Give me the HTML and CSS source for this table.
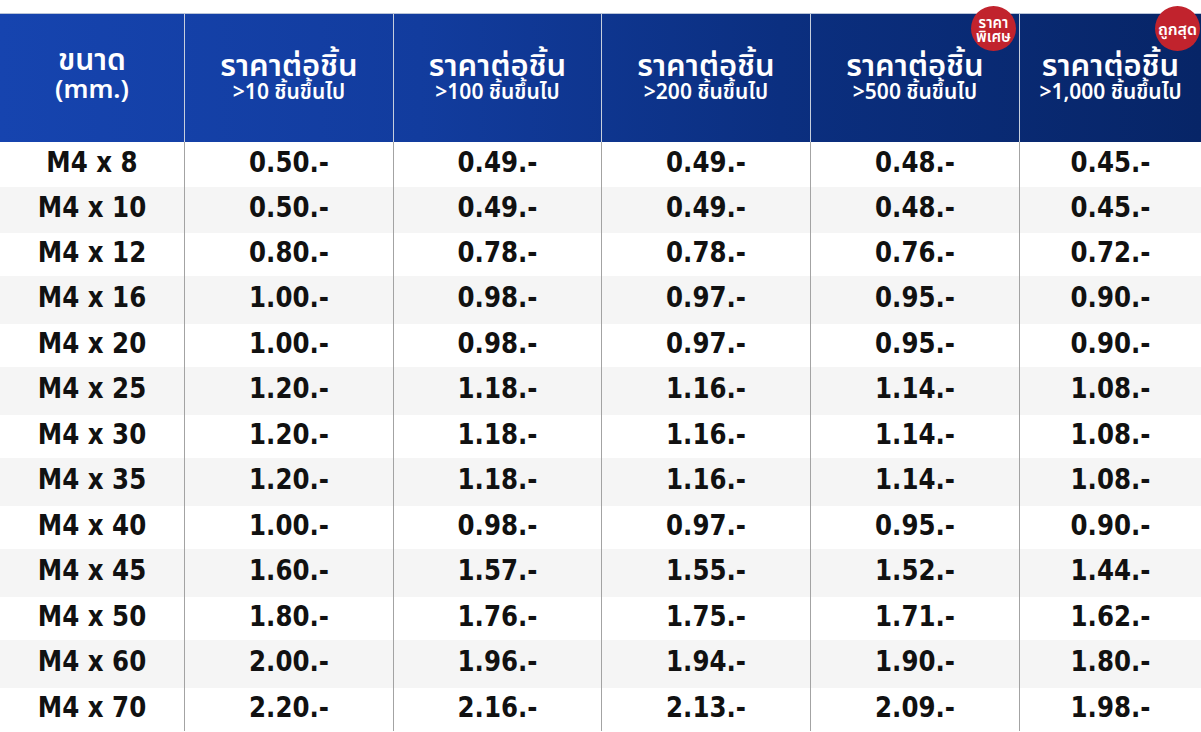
FILE: index.html
```html
<!DOCTYPE html>
<html lang="th">
<head>
<meta charset="utf-8">
<title>ราคา M4</title>
<link rel="stylesheet" href="styles.css">
</head>
<body>
<div class="table">
  <div class="head">
    <div class="hcell first"><div class="title big">ขนาด</div><div class="title mm">(mm.)</div></div>
    <div class="hcell"><div class="title">ราคาต่อชิ้น</div><div class="sub">&gt;10 ชิ้นขึ้นไป</div></div>
    <div class="hcell"><div class="title">ราคาต่อชิ้น</div><div class="sub">&gt;100 ชิ้นขึ้นไป</div></div>
    <div class="hcell"><div class="title">ราคาต่อชิ้น</div><div class="sub">&gt;200 ชิ้นขึ้นไป</div></div>
    <div class="hcell"><div class="title">ราคาต่อชิ้น</div><div class="sub">&gt;500 ชิ้นขึ้นไป</div><div class="badge two"><span>ราคา</span><span>พิเศษ</span></div></div>
    <div class="hcell"><div class="title">ราคาต่อชิ้น</div><div class="sub">&gt;1,000 ชิ้นขึ้นไป</div><div class="badge one"><span>ถูกสุด</span></div></div>
  </div>
  <div class="body">
    <div class="row"><div class="cell"><span>M4 x 8</span></div><div class="cell"><span>0.50.-</span></div><div class="cell"><span>0.49.-</span></div><div class="cell"><span>0.49.-</span></div><div class="cell"><span>0.48.-</span></div><div class="cell"><span>0.45.-</span></div></div>
    <div class="row"><div class="cell"><span>M4 x 10</span></div><div class="cell"><span>0.50.-</span></div><div class="cell"><span>0.49.-</span></div><div class="cell"><span>0.49.-</span></div><div class="cell"><span>0.48.-</span></div><div class="cell"><span>0.45.-</span></div></div>
    <div class="row"><div class="cell"><span>M4 x 12</span></div><div class="cell"><span>0.80.-</span></div><div class="cell"><span>0.78.-</span></div><div class="cell"><span>0.78.-</span></div><div class="cell"><span>0.76.-</span></div><div class="cell"><span>0.72.-</span></div></div>
    <div class="row"><div class="cell"><span>M4 x 16</span></div><div class="cell"><span>1.00.-</span></div><div class="cell"><span>0.98.-</span></div><div class="cell"><span>0.97.-</span></div><div class="cell"><span>0.95.-</span></div><div class="cell"><span>0.90.-</span></div></div>
    <div class="row"><div class="cell"><span>M4 x 20</span></div><div class="cell"><span>1.00.-</span></div><div class="cell"><span>0.98.-</span></div><div class="cell"><span>0.97.-</span></div><div class="cell"><span>0.95.-</span></div><div class="cell"><span>0.90.-</span></div></div>
    <div class="row"><div class="cell"><span>M4 x 25</span></div><div class="cell"><span>1.20.-</span></div><div class="cell"><span>1.18.-</span></div><div class="cell"><span>1.16.-</span></div><div class="cell"><span>1.14.-</span></div><div class="cell"><span>1.08.-</span></div></div>
    <div class="row"><div class="cell"><span>M4 x 30</span></div><div class="cell"><span>1.20.-</span></div><div class="cell"><span>1.18.-</span></div><div class="cell"><span>1.16.-</span></div><div class="cell"><span>1.14.-</span></div><div class="cell"><span>1.08.-</span></div></div>
    <div class="row"><div class="cell"><span>M4 x 35</span></div><div class="cell"><span>1.20.-</span></div><div class="cell"><span>1.18.-</span></div><div class="cell"><span>1.16.-</span></div><div class="cell"><span>1.14.-</span></div><div class="cell"><span>1.08.-</span></div></div>
    <div class="row"><div class="cell"><span>M4 x 40</span></div><div class="cell"><span>1.00.-</span></div><div class="cell"><span>0.98.-</span></div><div class="cell"><span>0.97.-</span></div><div class="cell"><span>0.95.-</span></div><div class="cell"><span>0.90.-</span></div></div>
    <div class="row"><div class="cell"><span>M4 x 45</span></div><div class="cell"><span>1.60.-</span></div><div class="cell"><span>1.57.-</span></div><div class="cell"><span>1.55.-</span></div><div class="cell"><span>1.52.-</span></div><div class="cell"><span>1.44.-</span></div></div>
    <div class="row"><div class="cell"><span>M4 x 50</span></div><div class="cell"><span>1.80.-</span></div><div class="cell"><span>1.76.-</span></div><div class="cell"><span>1.75.-</span></div><div class="cell"><span>1.71.-</span></div><div class="cell"><span>1.62.-</span></div></div>
    <div class="row"><div class="cell"><span>M4 x 60</span></div><div class="cell"><span>2.00.-</span></div><div class="cell"><span>1.96.-</span></div><div class="cell"><span>1.94.-</span></div><div class="cell"><span>1.90.-</span></div><div class="cell"><span>1.80.-</span></div></div>
    <div class="row"><div class="cell"><span>M4 x 70</span></div><div class="cell"><span>2.20.-</span></div><div class="cell"><span>2.16.-</span></div><div class="cell"><span>2.13.-</span></div><div class="cell"><span>2.09.-</span></div><div class="cell"><span>1.98.-</span></div></div>
  </div>
</div>
</body>
</html>
```

FILE: styles.css
```css
html, body {
  margin: 0;
  padding: 0;
  background: #ffffff;
  overflow: hidden;
}
body {
  font-family: "Noto Sans", "Noto Sans Thai", "Noto Sans Thai UI", "DejaVu Sans", sans-serif;
  font-weight: 700;
  color: #111111;
}
.table {
  padding-top: 13px;
  width: 1201px;
}
.head, .row {
  display: grid;
  grid-template-columns: 184px 209px 208px 209px 209px 182px;
}
.head {
  height: 128px;
  border-top: 1px solid #b9c4d8;
  background: linear-gradient(90deg, #1644af 0%, #123c9e 35%, #0b2f80 65%, #072567 100%);
  color: #ffffff;
}
.hcell {
  position: relative;
  display: flex;
  flex-direction: column;
  align-items: center;
  justify-content: center;
  border-left: 1px solid #c6cedd;
  padding-bottom: 4px;
}
.hcell.first {
  border-left: none;
  padding-bottom: 12px;
}
.title {
  font-size: 31px;
  line-height: 30px;
  font-weight: 600;
}
.title.big {
  font-size: 30px;
  line-height: 31px;
}
.title.mm {
  font-size: 26px;
  line-height: 28px;
}
.sub {
  font-size: 21px;
  line-height: 25px;
  font-weight: 600;
}
.badge {
  position: absolute;
  top: -8px;
  width: 45px;
  height: 45px;
  border-radius: 50%;
  background: #c1232d;
  color: #ffffff;
  display: flex;
  flex-direction: column;
  align-items: center;
  justify-content: center;
  font-size: 15px;
  line-height: 14px;
  font-weight: 600;
}
.badge.two {
  right: 3px;
}
.badge.one {
  right: 1px;
  font-size: 16px;
}
.row {
  height: 43px;
}
.row:nth-child(even) {
  background: #f5f5f5;
  height: 48px;
}
.row:nth-child(1) { height: 45px; }
.row:nth-child(2) { height: 46px; }
.cell {
  display: flex;
  align-items: center;
  justify-content: center;
  border-left: 1px solid #a3a3a3;
  font-family: "DejaVu Sans", "Noto Sans", sans-serif;
  font-size: 24.5px;
  padding-bottom: 5px;
}
.cell span {
  display: inline-block;
  transform: scaleY(1.15);
}
.cell:first-child {
  border-left: none;
}
```
